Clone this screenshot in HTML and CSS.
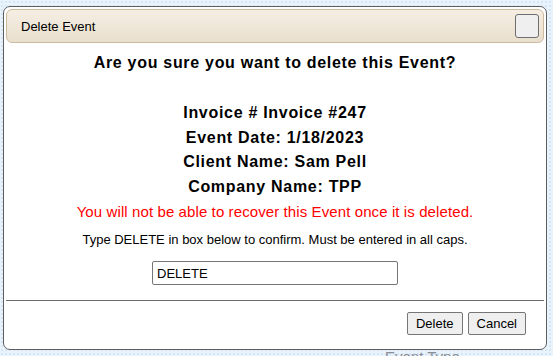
FILE: index.html
```html
<!DOCTYPE html>
<html lang="en">
<head>
    <meta charset="UTF-8">
    <title>Delete Event</title>
    <link rel="stylesheet" href="styles.css">
</head>
<body>
    <div class="page">
        <div class="page-label">Event Type</div>
    </div>

    <div class="dialog">
        <div class="dialog-titlebar">
            <span class="dialog-title">Delete Event</span>
            <button class="dialog-close" title="Close"></button>
        </div>

        <div class="dialog-content">
            <div class="confirm-title">Are you sure you want to delete this Event?</div>
            <div class="confirm-gap">&nbsp;</div>
            <div class="confirm-line">Invoice # Invoice #247</div>
            <div class="confirm-line">Event Date: 1/18/2023</div>
            <div class="confirm-line">Client Name: Sam Pell</div>
            <div class="confirm-line">Company Name: TPP</div>
            <div class="warning">You will not be able to recover this Event once it is deleted.</div>
            <div class="hint">Type DELETE in box below to confirm. Must be entered in all caps.</div>
            <input class="confirm-input" type="text" value="DELETE">
        </div>

        <div class="dialog-buttons">
            <button class="btn">Delete</button>
            <button class="btn">Cancel</button>
        </div>
    </div>
</body>
</html>
```

FILE: styles.css
```css
* {
    box-sizing: border-box;
    margin: 0;
    padding: 0;
}

body {
    font-family: 'Liberation Sans', Arial, sans-serif;
    color: #000;
    background-color: #e9f3fc;
    background-image: radial-gradient(#d6e6f6 1px, transparent 1.2px);
    background-size: 4px 4px;
    height: 356px;
    overflow: hidden;
}

.page {
    height: 356px;
    display: flex;
    align-items: flex-end;
    padding-left: 385px;
}

.page-label {
    font-size: 15px;
    color: #8a8f96;
    line-height: 14px;
    margin-bottom: -8px;
}

/* dialog sits over the page */
.dialog {
    position: absolute;
    top: 6px;
    left: 3px;
    width: 544px;
    height: 344px;
    background: #fff;
    border: 1px solid #5f5f5f;
    border-radius: 7px;
    padding: 2px;
    display: flex;
    flex-direction: column;
}

.dialog-titlebar {
    height: 34px;
    display: flex;
    align-items: center;
    justify-content: space-between;
    padding: 0 4px 0 14px;
    border: 1px solid #cdbb9f;
    border-radius: 6px;
    background: linear-gradient(#f5eee3, #e9dfcd);
}

.dialog-title {
    font-size: 13px;
}

.dialog-close {
    width: 24px;
    height: 24px;
    border: 1px solid #6e6e6e;
    border-radius: 3px;
    background: #efefef;
}

.dialog-content {
    padding-top: 7px;
    text-align: center;
    flex: 1;
}

.confirm-title,
.confirm-line {
    font-size: 16px;
    font-weight: bold;
    letter-spacing: 0.7px;
    line-height: 25px;
}

.confirm-gap {
    height: 26px;
}

.confirm-line {
    line-height: 24.7px;
}

.warning {
    font-size: 15px;
    letter-spacing: 0.1px;
    color: #f00;
    line-height: 23.7px;
}

.hint {
    font-size: 13px;
    line-height: 18px;
    margin-top: 7.5px;
}

.confirm-input {
    display: block;
    margin: 12px auto 0;
    width: 246px;
    height: 24px;
    padding: 0 4px;
    border: 1px solid #767676;
    border-radius: 2px;
    font-family: inherit;
    font-size: 13px;
    color: #000;
}

.dialog-buttons {
    border-top: 1px solid #6b6b6b;
    display: flex;
    justify-content: flex-end;
    gap: 5px;
    padding: 11px 18px 12px 0;
}

.btn {
    height: 23px;
    padding: 0 8px;
    border: 1px solid #767676;
    border-radius: 2px;
    background: #efefef;
    font-family: inherit;
    font-size: 13px;
    color: #000;
}
```
